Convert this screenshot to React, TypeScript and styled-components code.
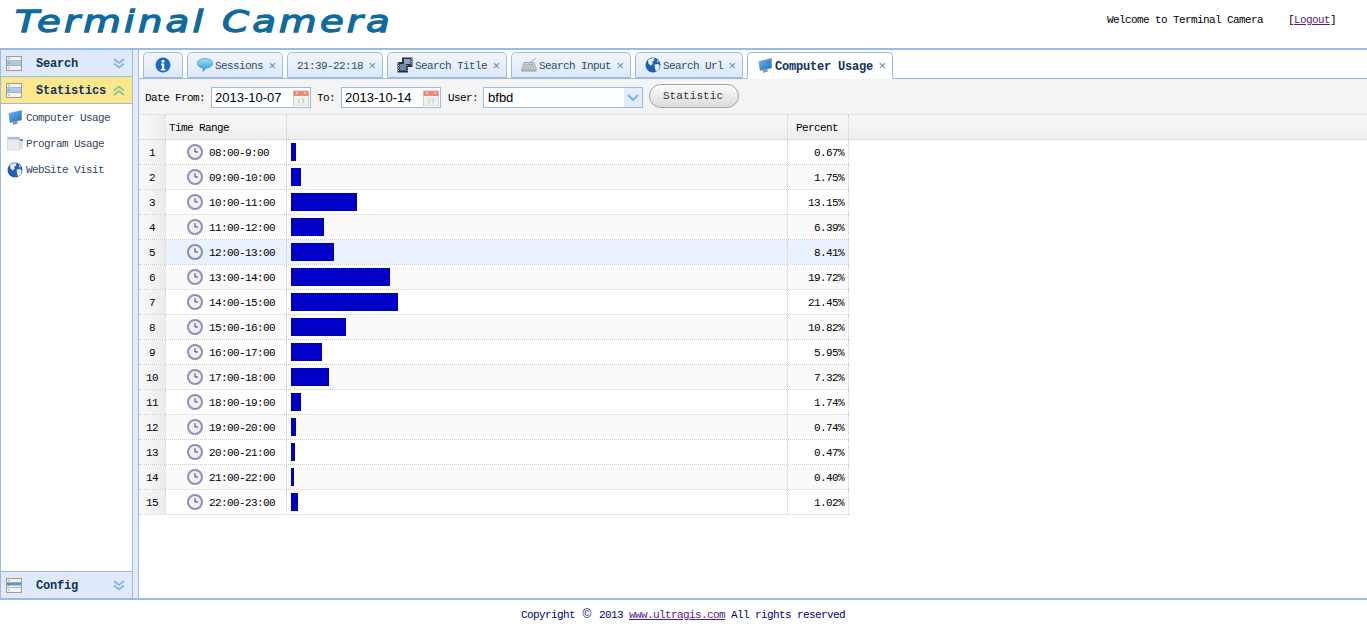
import React from 'react';
import styled, { createGlobalStyle } from 'styled-components';

const GlobalStyle = createGlobalStyle`
  html, body { margin: 0; padding: 0; background: #fff; overflow: hidden; }
  body { font-family: "Liberation Mono", monospace; font-size: 11px; letter-spacing: -0.6px; color: #000; }
`;

const rows = [
  ['08:00-9:00', 5, '0.67%'],
  ['09:00-10:00', 10, '1.75%'],
  ['10:00-11:00', 66, '13.15%'],
  ['11:00-12:00', 33, '6.39%'],
  ['12:00-13:00', 43, '8.41%'],
  ['13:00-14:00', 99, '19.72%'],
  ['14:00-15:00', 107, '21.45%'],
  ['15:00-16:00', 55, '10.82%'],
  ['16:00-17:00', 31, '5.95%'],
  ['17:00-18:00', 38, '7.32%'],
  ['18:00-19:00', 10, '1.74%'],
  ['19:00-20:00', 5, '0.74%'],
  ['20:00-21:00', 4, '0.47%'],
  ['21:00-22:00', 3, '0.40%'],
  ['22:00-23:00', 7, '1.02%'],
] as const;

const InfoIcon = () => (
  <svg width="16" height="16" viewBox="0 0 16 16">
    <circle cx="8" cy="8" r="7.5" fill="#1c68c8" />
    <circle cx="8" cy="4.2" r="1.5" fill="#fff" />
    <path d="M6 6.6h3.2v5.4H10.4v1.4H5.8V12h1.1V8H6z" fill="#fff" />
  </svg>
);

const ChatIcon = () => (
  <svg width="16" height="16" viewBox="0 0 16 16">
    <defs>
      <linearGradient id="chat" x1="0" y1="0" x2="0" y2="1">
        <stop offset="0" stopColor="#9fe2f6" />
        <stop offset="1" stopColor="#2199d6" />
      </linearGradient>
    </defs>
    <path d="M8 1.5C12.4 1.5 15.7 3.4 15.7 6.2S12.4 11 9 11L6 14.5 6.2 10.9C2.8 10.5.3 8.7.3 6.2S3.6 1.5 8 1.5z" fill="url(#chat)" stroke="#2b86bd" strokeWidth=".6" />
  </svg>
);

const FilmIcon = () => (
  <svg width="16" height="16" viewBox="0 0 16 16">
    <rect x="5" y="0.5" width="10.5" height="9.5" fill="#2b3442" />
    <rect x="0.5" y="5" width="10.5" height="10.5" fill="#252d3a" />
    <rect x="2.5" y="7" width="6.5" height="6.5" fill="#6f86a8" />
    <rect x="7" y="2" width="6.5" height="5" fill="#8ba2c0" />
    <path d="M1 6h1M1 8.5h1M1 11h1M1 13.5h1M9.6 8.5h1M9.6 11h1M9.6 13.5h1M14 2h1M14 4.5h1M14 7h1" stroke="#d8dde4" />
  </svg>
);

const KeyboardIcon = () => (
  <svg width="16" height="16" viewBox="0 0 16 16">
    <path d="M10 5C10 2.5 13 4 15 1" fill="none" stroke="#888" strokeWidth=".7" />
    <path d="M3 5.5h10l2.5 7.5H.5z" fill="#d6d8da" stroke="#8b8d90" strokeWidth=".7" />
    <path d="M3.5 7.3h9M3 9.2h10M2.4 11.1h11.2" stroke="#8f9296" strokeWidth="1" strokeDasharray="1 .6" />
    <rect x="0.5" y="13" width="15" height="1.6" fill="#a9abae" />
  </svg>
);

const GlobeIcon = () => (
  <svg width="16" height="16" viewBox="0 0 16 16">
    <circle cx="8" cy="8" r="7.5" fill="#1f5fb8" />
    <path d="M3 3.2C5 1.2 8 1 9.5 1.4L9 3.6 7.2 5 7.8 7 5.6 8.6 3.4 6.4zM9.6 7.5l3.6-.6 1.6 2.2-1.4 4-2.6 1.4-.8-3.4zM12 2.8l2 2.2-1.8.2z" fill="#e8f1fb" />
  </svg>
);

const MonitorIcon = () => (
  <svg width="16" height="16" viewBox="0 0 16 16">
    <defs>
      <linearGradient id="screen" x1="0" y1="0" x2="1" y2="1">
        <stop offset="0" stopColor="#6fb6ee" />
        <stop offset="1" stopColor="#1c6ec0" />
      </linearGradient>
    </defs>
    <path d="M2 3.5L14.5.5v9.5L3 12.5z" fill="url(#screen)" stroke="#5a7fa8" strokeWidth=".5" />
    <path d="M6 12l4-1 1 2.5-5 1.5z" fill="#8d939a" />
  </svg>
);

const WindowsIcon = () => (
  <svg width="16" height="16" viewBox="0 0 16 16">
    <rect x="6" y="3" width="10" height="10" fill="#dfe2e6" />
    <rect x="6" y="3" width="10" height="2" fill="#7f8a99" />
    <rect x="0.5" y="1" width="12" height="13" fill="#e9ebee" stroke="#c6cad0" strokeWidth=".5" />
    <rect x="0.5" y="1" width="12" height="2.5" fill="#a9c3e2" />
  </svg>
);

const ClockIcon = () => (
  <svg width="16" height="16" viewBox="0 0 16 16">
    <circle cx="8" cy="8" r="7" fill="#f0eff5" stroke="#8d90b4" strokeWidth="2" />
    <path d="M8 4.2V8h3" fill="none" stroke="#3f4052" strokeWidth="1" />
  </svg>
);

const CalendarIcon = () => (
  <svg width="16" height="16" viewBox="0 0 16 16">
    <rect x="0.5" y="1" width="15" height="15" fill="#f1f1ee" stroke="#cfd0cc" />
    <rect x="0.5" y="1" width="15" height="5" fill="#ec8a78" />
    <circle cx="4" cy="3" r=".8" fill="#fff" />
    <circle cx="12" cy="3" r=".8" fill="#fff" />
    <path d="M6 9v4.5M8.5 9h2.6l-1.6 4.5" fill="none" stroke="#c3c4c0" />
  </svg>
);

const StackIcon = ({ $band = 0 }: { $band?: number }) => (
  <svg width="16" height="15" viewBox="0 0 16 15">
    <rect x="0.5" y="0.5" width="15" height="14" fill="#f2f2f2" stroke="#9c9c9c" />
    <rect x="1" y={$band === 1 ? 4.5 : 1} width="14" height={$band === 1 ? 3 : 0} fill="#5d9bd6" />
    {$band === 0 && <rect x="1" y="5" width="14" height="4.5" fill="#a9cbea" />}
    <path d="M1 4.5h14M1 9.5h14" stroke="#8f8f8f" strokeWidth=".6" />
    <path d="M2.5 2.5h1M2.5 7h1M2.5 12h1" stroke="#555" />
  </svg>
);

const Chevrons = ({ $up, $color }: { $up?: boolean; $color: string }) => (
  <svg width="12" height="11" viewBox="0 0 12 11" style={$up ? { transform: 'scaleY(-1)' } : undefined}>
    <path d="M1 1l5 4 5-4M1 5.5l5 4 5-4" fill="none" stroke={$color} strokeWidth="1.7" />
  </svg>
);

const tabs = [
  { icon: <ChatIcon />, title: 'Sessions', width: 96 },
  { title: '21:39-22:18', width: 96 },
  { icon: <FilmIcon />, title: 'Search Title', width: 120 },
  { icon: <KeyboardIcon />, title: 'Search Input', width: 120 },
  { icon: <GlobeIcon />, title: 'Search Url', width: 108 },
  { icon: <MonitorIcon />, title: 'Computer Usage', width: 146, active: true },
];

const App = () => (
  <Page>
    <GlobalStyle />
    <Header>
      <Logo><LogoText>Terminal Camera</LogoText></Logo>
      <Welcome>Welcome to Terminal Camera</Welcome>
      <LogoutBox>[<a href="#logout">Logout</a>]</LogoutBox>
    </Header>
    <Body>
      <Sidebar>
        <AccordionTitle>
          <StackIcon />
          <AccordionLabel>Search</AccordionLabel>
          <Chevrons $color="#7db4e4" />
        </AccordionTitle>
        <AccordionTitle $active>
          <StackIcon />
          <AccordionLabel>Statistics</AccordionLabel>
          <Chevrons $up $color="#8cc0a0" />
        </AccordionTitle>
        <MenuList>
          <MenuItem><MonitorIcon />Computer Usage</MenuItem>
          <MenuItem><WindowsIcon />Program Usage</MenuItem>
          <MenuItem><GlobeIcon />WebSite Visit</MenuItem>
        </MenuList>
        <AccordionTitle $last>
          <StackIcon $band={1} />
          <AccordionLabel>Config</AccordionLabel>
          <Chevrons $color="#7db4e4" />
        </AccordionTitle>
      </Sidebar>
      <Splitter />
      <Main>
        <TabStrip>
          <Tab $width={40} $center><InfoIcon /></Tab>
          {tabs.map((t) => (
            <Tab key={t.title} $width={t.width} $active={t.active}>
              {t.icon}
              <TabTitle $active={t.active}>{t.title}</TabTitle>
              <TabClose>×</TabClose>
            </Tab>
          ))}
        </TabStrip>
        <Toolbar>
          <ToolLabel>Date From:</ToolLabel>
          <DateBox><FieldText>2013-10-07</FieldText><CalendarIcon /></DateBox>
          <ToolLabel>To:</ToolLabel>
          <DateBox><FieldText>2013-10-14</FieldText><CalendarIcon /></DateBox>
          <ToolLabel $before={1} $after={5}>User:</ToolLabel>
          <Combo>
            <FieldText>bfbd</FieldText>
            <ComboArrow>
              <svg width="12" height="8" viewBox="0 0 12 8"><path d="M1 1l5 5 5-5" fill="none" stroke="#7db4e4" strokeWidth="2" /></svg>
            </ComboArrow>
          </Combo>
          <PillButton>Statistic</PillButton>
        </Toolbar>
        <GridHead>
          <NumCell />
          <HeadCell $width={121}>Time Range</HeadCell>
          <HeadCell $width={501} />
          <HeadCell $width={61} $center>Percent</HeadCell>
        </GridHead>
        {rows.map(([range, bar, pct], i) => (
          <Row key={range}>
            <NumCell>{i + 1}</NumCell>
            <Cell $width={121} $hover={i === 4} $even={i % 2 === 1}>
              <TimeWrap><ClockIcon /><TimeText>{range}</TimeText></TimeWrap>
            </Cell>
            <Cell $width={501} $hover={i === 4} $even={i % 2 === 1}>
              <Bar style={{ width: bar }} />
            </Cell>
            <Cell $width={61} $right $hover={i === 4} $even={i % 2 === 1}>{pct}</Cell>
          </Row>
        ))}
      </Main>
    </Body>
    <Footer>
      Copyright <Copy>©</Copy> 2013 <a href="#site">www.ultragis.com</a> All rights reserved
    </Footer>
  </Page>
);

export default App;

const Page = styled.div`
  width: 1367px;
  height: 627px;
  display: flex;
  flex-direction: column;
`;
const Header = styled.div`
  height: 48px;
  flex-shrink: 0;
  display: flex;
  align-items: center;
  border-bottom: 2px solid #9dbbdf;
  padding: 0 31px 0 15px;
`;
const Logo = styled.div`
  flex: 1;
  margin-top: -6px;
`;
const LogoText = styled.span`
  display: inline-block;
  transform: scaleX(1.245);
  transform-origin: left center;
  font-family: "DejaVu Sans", sans-serif;
  font-style: italic;
  font-weight: 400;
  -webkit-text-stroke: 1.3px #0f6a9e;
  font-size: 31px;
  letter-spacing: 2.6px;
  color: #0f6a9e;
`;
const Welcome = styled.div`
  margin-top: -8px;
`;
const LogoutBox = styled.div`
  margin: -8px 0 0 25px;
  a { color: #551a8b; }
`;
const Body = styled.div`
  height: 548px;
  flex-shrink: 0;
  display: flex;
  border-bottom: 2px solid #9dbbdf;
`;
const Sidebar = styled.div`
  width: 131px;
  flex-shrink: 0;
  display: flex;
  flex-direction: column;
  border-left: 1px solid #9dbbdf;
  border-right: 1px solid #9dbbdf;
`;
const AccordionTitle = styled.div<{ $active?: boolean; $last?: boolean }>`
  height: 26px;
  display: flex;
  align-items: center;
  padding: 0 7px 0 5px;
  background: ${(p) => (p.$active ? '#fbe88c' : '#dfeafc')};
  border-bottom: ${(p) => (p.$last ? 'none' : '1px solid #9dbbdf')};
  border-top: ${(p) => (p.$last ? '1px solid #9dbbdf' : 'none')};
`;
const AccordionLabel = styled.span`
  flex: 1;
  margin: 2px 0 0 14px;
  font-weight: 700;
  font-size: 12px;
  letter-spacing: -0.2px;
  color: #10305f;
`;
const MenuList = styled.div`
  flex: 1;
  padding-top: 1px;
`;
const MenuItem = styled.div`
  height: 26px;
  display: flex;
  align-items: center;
  gap: 3px;
  padding-left: 6px;
  color: #33475f;
`;
const Splitter = styled.div`
  width: 5px;
  flex-shrink: 0;
  background: #e4ecf7;
  border-right: 1px solid #9dbbdf;
`;
const Main = styled.div`
  flex: 1;
  min-width: 0;
`;
const TabStrip = styled.div`
  height: 29px;
  display: flex;
  align-items: flex-end;
  gap: 4px;
  padding-left: 4px;
  box-sizing: border-box;
  border-bottom: 1px solid #9dbbdf;
`;
const Tab = styled.div<{ $width: number; $active?: boolean; $center?: boolean }>`
  width: ${(p) => p.$width}px;
  box-sizing: border-box;
  display: flex;
  align-items: center;
  justify-content: ${(p) => (p.$center ? 'center' : 'flex-start')};
  gap: 2px;
  padding: 0 ${(p) => (p.$center ? '0' : '5px')} 0 ${(p) => (p.$center ? '0' : '9px')};
  border: 1px solid #9dbbdf;
  border-radius: 5px 5px 0 0;
  margin-bottom: ${(p) => (p.$active ? '-1px' : '0')};
  height: ${(p) => (p.$active ? '27px' : '26px')};
  border-bottom: ${(p) => (p.$active ? '1px solid #fff' : '1px solid #9dbbdf')};
  background: ${(p) => (p.$active ? '#fff' : 'linear-gradient(#f2f6fd, #dce8fa)')};
`;
const TabTitle = styled.span<{ $active?: boolean }>`
  flex: 1;
  margin-top: 2px;
  white-space: nowrap;
  color: ${(p) => (p.$active ? '#10305f' : '#2f4a6a')};
  font-weight: ${(p) => (p.$active ? 700 : 400)};
  font-size: ${(p) => (p.$active ? '12px' : '11px')};
  letter-spacing: ${(p) => (p.$active ? '-0.2px' : '-0.6px')};
`;
const TabClose = styled.span`
  font-family: "Liberation Sans", sans-serif;
  font-size: 13px;
  letter-spacing: 0;
  color: #6d8aa8;
  margin-right: 1px;
`;
const Toolbar = styled.div`
  height: 36px;
  display: flex;
  align-items: center;
  padding: 2px 0 0 6px;
  box-sizing: border-box;
  background: #f4f4f4;
  border-bottom: 1px solid #e2e2e2;
`;
const ToolLabel = styled.span<{ $before?: number; $after?: number }>`
  white-space: nowrap;
  margin: 0 ${(p) => p.$after ?? 6}px 0 ${(p) => p.$before ?? 0}px;
`;
const DateBox = styled.div`
  width: 100px;
  height: 21px;
  box-sizing: border-box;
  display: flex;
  align-items: center;
  justify-content: space-between;
  padding: 0 1px 0 3px;
  background: #fff;
  border: 1px solid #9dbbdf;
  margin-right: 6px;
`;
const FieldText = styled.span`
  font-family: "Liberation Sans", sans-serif;
  font-size: 13px;
  letter-spacing: 0;
`;
const Combo = styled.div`
  width: 160px;
  height: 21px;
  box-sizing: border-box;
  display: flex;
  align-items: center;
  justify-content: space-between;
  padding-left: 4px;
  background: #fff;
  border: 1px solid #9dbbdf;
`;
const ComboArrow = styled.span`
  width: 18px;
  height: 19px;
  background: #e2ecfa;
  display: flex;
  align-items: center;
  justify-content: center;
`;
const PillButton = styled.div`
  width: 90px;
  height: 24px;
  box-sizing: border-box;
  margin: -3px 0 0 6px;
  padding-right: 2px;
  display: flex;
  align-items: center;
  justify-content: center;
  border: 1px solid #a4a4a4;
  border-radius: 12px;
  background: linear-gradient(#fbfbfb, #dcdcdc);
  color: #333;
  letter-spacing: 0.1px;
`;
const GridHead = styled.div`
  height: 25px;
  display: flex;
  box-sizing: border-box;
  background: linear-gradient(#f8f8f8, #eeeeee);
  border-bottom: 1px solid #dcdcdc;
`;
const NumCell = styled.div`
  width: 27px;
  box-sizing: border-box;
  padding-top: 2px;
  display: flex;
  align-items: center;
  justify-content: center;
  background: linear-gradient(90deg, #fafafa, #ececec);
  border-right: 1px dotted #ccc;
`;
const HeadCell = styled.div<{ $width: number; $center?: boolean }>`
  width: ${(p) => p.$width}px;
  box-sizing: border-box;
  display: flex;
  align-items: center;
  justify-content: ${(p) => (p.$center ? 'center' : 'flex-start')};
  padding: 2px ${(p) => (p.$center ? '2px' : '0')} 0 ${(p) => (p.$center ? '0' : '3px')};
  border-right: 1px dotted #ccc;
`;
const Row = styled.div`
  width: 710px;
  height: 25px;
  display: flex;
  box-sizing: border-box;
  border-bottom: 1px dotted #ccc;
`;
const Cell = styled.div<{ $width: number; $right?: boolean; $hover?: boolean; $even?: boolean }>`
  width: ${(p) => p.$width}px;
  box-sizing: border-box;
  display: flex;
  align-items: center;
  justify-content: ${(p) => (p.$right ? 'flex-end' : 'flex-start')};
  padding: ${(p) => (p.$right ? '2px' : '0')} 4px 0;
  border-right: 1px dotted #ccc;
  background: ${(p) => (p.$hover ? '#eaf2ff' : p.$even ? '#fafafa' : '#fff')};
`;
const TimeWrap = styled.div`
  display: flex;
  align-items: center;
  gap: 6px;
  padding-left: 17px;
`;
const TimeText = styled.span`
  margin-top: 2px;
`;
const Bar = styled.div`
  height: 18px;
  box-sizing: border-box;
  background: #0000c8;
  border: 1px dotted #000080;
`;
const Footer = styled.div`
  flex: 1;
  padding: 1px 1px 0 0;
  text-align: center;
  line-height: 27px;
  color: #000080;
  white-space: pre-wrap;
  a { color: #551a8b; }
`;
const Copy = styled.span`
  display: inline-block;
  width: 12px;
  font-family: "Liberation Sans", sans-serif;
  font-size: 12px;
  letter-spacing: 0;
`;
